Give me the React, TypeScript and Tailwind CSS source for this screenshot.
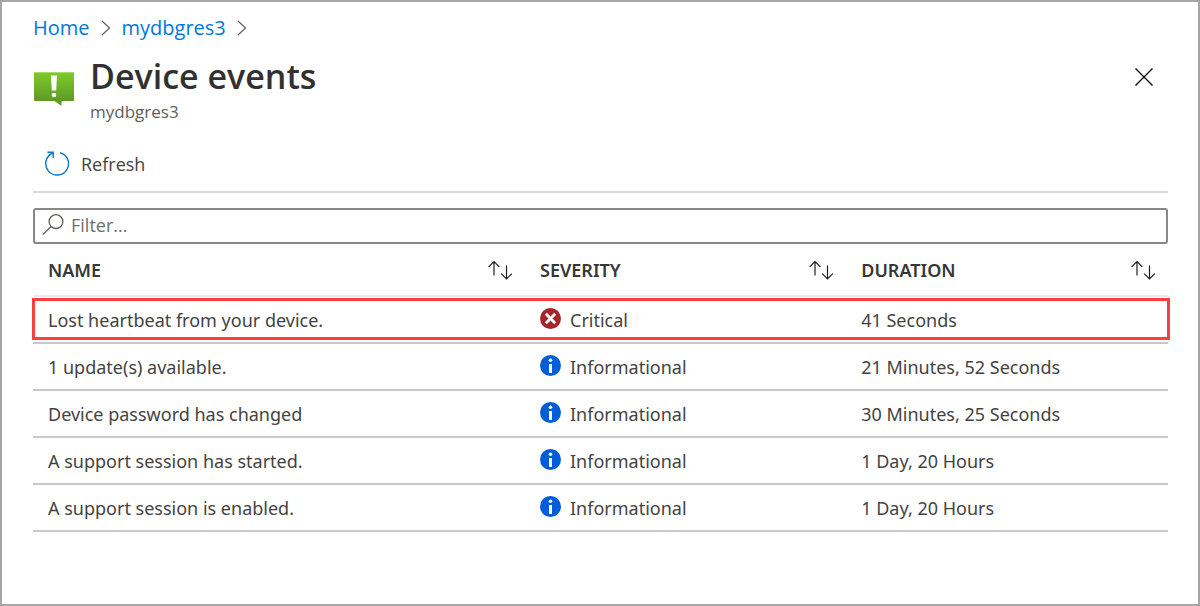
import React from "react";

type Severity = "Critical" | "Informational";

interface DeviceEvent {
  name: string;
  severity: Severity;
  duration: string;
  highlighted?: boolean;
}

const events: DeviceEvent[] = [
  { name: "Lost heartbeat from your device.", severity: "Critical", duration: "41 Seconds", highlighted: true },
  { name: "1 update(s) available.", severity: "Informational", duration: "21 Minutes, 52 Seconds" },
  { name: "Device password has changed", severity: "Informational", duration: "30 Minutes, 25 Seconds" },
  { name: "A support session has started.", severity: "Informational", duration: "1 Day, 20 Hours" },
  { name: "A support session is enabled.", severity: "Informational", duration: "1 Day, 20 Hours" },
];

const columns = [
  { label: "NAME", width: "w-[43.35%]" },
  { label: "SEVERITY", width: "w-[28.3%]" },
  { label: "DURATION", width: "w-[28.35%]" },
];

function Chevron() {
  return (
    <svg className="h-4 w-2.5 shrink-0" viewBox="0 0 10 16" fill="none" stroke="#605e5c" strokeWidth="1.2" aria-hidden="true">
      <path d="M1 1 L8.5 8 L1 15" />
    </svg>
  );
}

function EventsIcon() {
  return (
    <svg className="h-[34px] w-10 shrink-0" viewBox="0 0 40 34" aria-hidden="true">
      <defs>
        <linearGradient id="events-green" x1="0" y1="0" x2="0" y2="1">
          <stop offset="0" stopColor="#7fcb2c" />
          <stop offset="0.85" stopColor="#5e9a24" />
          <stop offset="1" stopColor="#5e9a24" />
        </linearGradient>
      </defs>
      <path d="M1 0 H39 Q40 0 40 1 V28 Q40 29 39 29 H27.5 V34 L20.5 29 H1 Q0 29 0 28 V1 Q0 0 1 0 Z" fill="url(#events-green)" />
      <path d="M0.5 1 Q0.5 0.5 1 0.5 H39 Q39.5 0.5 39.5 1" fill="none" stroke="#a4dc68" />
      <path d="M17 3.5 H23 L22.2 18.5 H17.8 Z" fill="#fff" />
      <circle cx="20" cy="23" r="2.3" fill="#fff" />
    </svg>
  );
}

function CloseIcon() {
  return (
    <svg className="size-[18px]" viewBox="0 0 18 18" fill="none" stroke="#000" strokeWidth="1.3" aria-hidden="true">
      <path d="M0.5 0.5 L17.5 17.5 M17.5 0.5 L0.5 17.5" />
    </svg>
  );
}

function RefreshIcon() {
  return (
    <svg className="size-[26px] shrink-0" viewBox="0 0 26 26" fill="none" stroke="#0078d4" strokeWidth="1.4" aria-hidden="true">
      <path d="M16 1.6 A11.4 11.4 0 1 1 9 2.0" />
      <path d="M3.4 1.3 H9.2 V7" />
    </svg>
  );
}

function SearchIcon() {
  return (
    <svg className="size-[22px] shrink-0" viewBox="0 0 22 22" fill="none" stroke="#605e5c" strokeWidth="1.3" aria-hidden="true">
      <circle cx="14" cy="7.6" r="6.9" />
      <path d="M9 12.5 L0.8 20.6" />
    </svg>
  );
}

function SortIcon() {
  return (
    <svg className="h-5 w-[25px]" viewBox="0 0 25 20" fill="none" stroke="#1f1f1f" strokeWidth="1.2" aria-hidden="true">
      <path d="M6 15.5 V1.5 M0.7 6.8 L6 1.5 L11.3 6.8" />
      <path d="M18.5 5.5 V19 M13.2 13.7 L18.5 19 L23.8 13.7" />
    </svg>
  );
}

function SeverityIcon({ severity }: { severity: Severity }) {
  if (severity === "Critical") {
    return (
      <svg className="size-[21px] shrink-0" viewBox="0 0 21 21" aria-hidden="true">
        <circle cx="10.5" cy="10.5" r="10.5" fill="#a4262c" />
        <path d="M5.8 5.8 L15.2 15.2 M15.2 5.8 L5.8 15.2" stroke="#fff" strokeWidth="2.8" />
      </svg>
    );
  }
  return (
    <svg className="size-[21px] shrink-0" viewBox="0 0 21 21" aria-hidden="true">
      <circle cx="10.5" cy="10.5" r="10.5" fill="#015cda" />
      <circle cx="10.5" cy="5.3" r="1.8" fill="#fff" />
      <path d="M9 9 H12 V18 H9 Z" fill="#fff" />
    </svg>
  );
}

export default function App() {
  return (
    <main className="min-h-screen border-2 border-[#a6a6a6] bg-white pr-[30px] pb-12 pl-[31px] font-['Open_Sans','Noto_Sans',sans-serif] text-lg text-[#444342]">
      <nav aria-label="Breadcrumb" className="flex h-12 items-center gap-[11px] pt-1 text-xl text-[#0078d4]">
        <a href="#home">Home</a>
        <Chevron />
        <a href="#mydbgres3">mydbgres3</a>
        <Chevron />
      </nav>

      <header className="flex items-start">
        <div className="pt-[22px] pl-px">
          <EventsIcon />
        </div>
        <div className="pl-4">
          <h1 className="text-[34px] leading-[52px] font-semibold text-[#323130]">Device events</h1>
          <p className="text-[17px] leading-5 text-[#605e5c]">mydbgres3</p>
        </div>
        <button type="button" aria-label="Close" className="mt-[18px] mr-[15px] ml-auto">
          <CloseIcon />
        </button>
      </header>

      <div className="flex h-[71px] items-center border-b-2 border-[#d8d8d8] pt-3.5 pl-[11px]">
        <button type="button" className="flex items-center gap-[11px]">
          <RefreshIcon />
          Refresh
        </button>
      </div>

      <label className="mt-[15px] flex h-9 items-center gap-[7px] rounded-[3px] border-2 border-[#8a8886] px-[7px] pb-0.5">
        <SearchIcon />
        <input
          type="text"
          aria-label="Filter"
          placeholder="Filter..."
          className="min-w-0 flex-1 bg-transparent outline-none placeholder:text-[#706e6c]"
        />
      </label>

      <table className="w-full table-fixed border-separate border-spacing-0 text-left font-['Noto_Sans','Open_Sans',sans-serif]">
        <thead>
          <tr>
            {columns.map((column) => (
              <th key={column.label} scope="col" className={`h-[53px] border-b-2 border-[#eaeaea] pr-3 pl-[15px] font-semibold text-[#383736] ${column.width}`}>
                <div className="flex items-center justify-between">
                  {column.label}
                  <button type="button" aria-label={`Sort by ${column.label}`}>
                    <SortIcon />
                  </button>
                </div>
              </th>
            ))}
          </tr>
        </thead>
        <tbody>
          {events.map((event) => (
            <tr key={event.name} className="relative">
              <td className="h-[47px] border-b-2 border-[#c8c8c8] pl-[15px]">
                {event.name}
                {event.highlighted && (
                  <span className="pointer-events-none absolute top-px -right-0.5 bottom-1 -left-px border-3 border-[#fc3e3e]" />
                )}
              </td>
              <td className="h-[47px] border-b-2 border-[#c8c8c8] pl-[15px]">
                <div className="flex items-start gap-[9px]">
                  <div className="pt-0.5">
                    <SeverityIcon severity={event.severity} />
                  </div>
                  {event.severity}
                </div>
              </td>
              <td className="h-[47px] border-b-2 border-[#c8c8c8] pl-[15px]">{event.duration}</td>
            </tr>
          ))}
        </tbody>
      </table>
    </main>
  );
}
